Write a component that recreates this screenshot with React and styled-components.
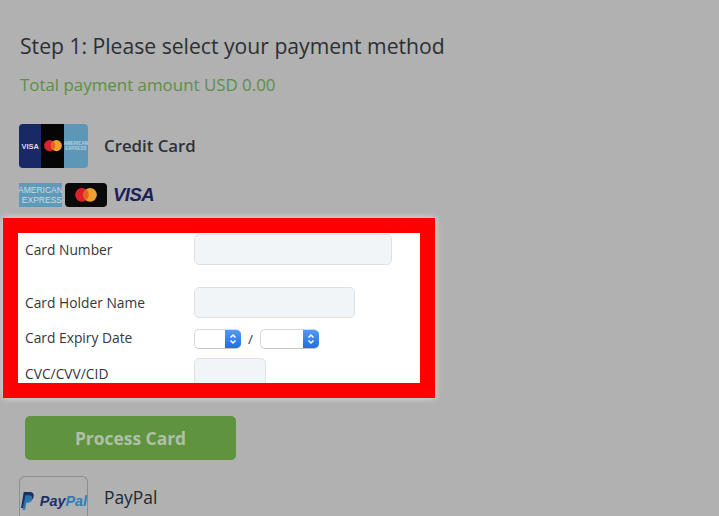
import React from 'react'
import styled, { createGlobalStyle } from 'styled-components'

const GlobalStyle = createGlobalStyle`
  html, body {
    margin: 0;
    height: 100%;
    overflow: hidden;
    background: #b1b1b1;
    font-family: "Open Sans", "Liberation Sans", sans-serif;
  }
`

const Page = styled.div`
  height: 516px;
  overflow: hidden;
  padding: 32px 0 0 19px;
  box-sizing: border-box;
  background: #b1b1b1;
`

const Heading = styled.h1`
  margin: 0 0 0 1px;
  font-size: 21.15px;
  line-height: 28px;
  font-weight: 400;
  color: #2b2f35;
`

const Total = styled.div`
  margin: 13px 0 0 1px;
  font-size: 16.9px;
  line-height: 24px;
  font-weight: 400;
  color: #5b8f44;
`

const MethodRow = styled.div`
  display: flex;
  align-items: center;
  gap: 16px;
  margin-top: ${p => p.$top}px;
`

const MethodIcon = styled.div`
  width: 69px;
  height: 44px;
  flex: none;
  border-radius: 4px;
  overflow: hidden;
  display: flex;
`

const PaypalBox = styled(MethodIcon)`
  box-sizing: border-box;
  border: 1px solid #8d8d8d;
  border-bottom: none;
  border-radius: 6px 6px 0 0;
  align-items: center;
  justify-content: flex-start;
  padding: 4px 0 0 0;
  gap: 5px;
`

const MethodLabel = styled.span`
  padding-bottom: 2px;
  font-size: 16.8px;
  font-weight: 600;
  color: #2c3238;
`

const PaypalLabel = styled(MethodLabel)`
  padding-bottom: 3px;
  font-size: 17.4px;
  font-weight: 500;
  color: #24282d;
`

const Stripe = styled.div`
  flex: 1;
  background: ${p => p.$bg};
  display: flex;
  align-items: center;
  justify-content: center;
`

const LogoRow = styled.div`
  display: flex;
  align-items: center;
  margin-top: 15px;
  height: 24px;
`

const Amex = styled.div`
  width: 43px;
  height: 24px;
  background: #5f9bb9;
  color: #c8dbe4;
  font-family: "Liberation Sans", sans-serif;
  font-size: 8.5px;
  line-height: 10px;
  font-weight: 400;
  display: flex;
  flex-direction: column;
  justify-content: center;
  white-space: nowrap;
  overflow: hidden;
`

const AmexLine = styled.span`
  align-self: ${p => p.$end ? 'flex-end' : 'center'};
`

const MasterTile = styled.div`
  width: 42px;
  height: 24px;
  margin-left: 3px;
  background: #0a0a0a;
  border-radius: 4px;
  display: flex;
  align-items: center;
  justify-content: center;
`

const VisaWord = styled.span`
  margin-left: 6px;
  font-family: "Liberation Sans", sans-serif;
  font-size: 18.5px;
  font-weight: 700;
  font-style: italic;
  color: #1b2058;
  letter-spacing: -0.5px;
`

const SmallVisa = styled.span`
  font-family: "Liberation Sans", sans-serif;
  font-size: 7.5px;
  font-weight: 700;
  color: #d9dce8;
`

const AmexSmall = styled.span`
  font-family: "Liberation Sans", sans-serif;
  font-size: 4.5px;
  line-height: 5px;
  font-weight: 700;
  color: #b6d1de;
  text-align: center;
`

const Frame = styled.section`
  margin: 11px 0 0 -16px;
  width: 432px;
  height: 180px;
  box-sizing: border-box;
  border: 15px solid #fe0000;
  background: #fff;
  overflow: hidden;
  box-shadow: 0 0 7px rgba(255, 255, 255, 0.6);
`

const FormRow = styled.div`
  display: flex;
  align-items: center;
  margin-top: ${p => p.$top}px;
`

const FieldLabel = styled.label`
  width: 169px;
  padding-left: 7px;
  flex: none;
  font-size: 13.8px;
  color: #33383d;
`

const ExpiryLabel = styled(FieldLabel)`
  padding-bottom: 2px;
`

const TextField = styled.input`
  width: ${p => p.$w}px;
  height: 31px;
  box-sizing: border-box;
  padding: 0;
  background: #f2f5f8;
  border: 1px solid #dfe2e5;
  border-radius: 5px;
  outline: none;
  flex: none;
`

const SelectBox = styled.div`
  width: ${p => p.$w}px;
  height: 20px;
  box-sizing: border-box;
  display: flex;
  justify-content: flex-end;
  background: #fff;
  border: 1px solid #d8d8d8;
  border-bottom-color: #c4c4c4;
  border-right: none;
  border-radius: 5px;
  overflow: hidden;
  flex: none;
`

const Stepper = styled.div`
  width: 16px;
  background: linear-gradient(#4f9bf5, #1f6fe0);
  display: flex;
  align-items: center;
  justify-content: center;
`

const Slash = styled.span`
  width: 19px;
  text-align: center;
  font-size: 13.5px;
  color: #33383d;
`

const ProcessButton = styled.button`
  display: block;
  margin: 18px 0 0 6px;
  width: 211px;
  height: 44px;
  border: none;
  border-radius: 5px;
  background: #5f9340;
  color: #b0c0a8;
  font-family: inherit;
  font-size: 17.4px;
  font-weight: 700;
`

const PaypalWord = styled.span`
  padding-top: 2px;
  font-family: "Liberation Sans", sans-serif;
  font-size: 14.4px;
  line-height: 15px;
  font-weight: 700;
  font-style: italic;
  color: #1b2f66;
  white-space: nowrap;
`

const PaypalAccent = styled.span`
  color: #2b7fb5;
`

function MastercardMark({ size = 22 }) {
  return (
    <svg width={size} height={size * 0.62} viewBox="0 0 24 15">
      <circle cx="7.5" cy="7.5" r="7.5" fill="#d9222a" />
      <circle cx="16.5" cy="7.5" r="7.5" fill="#ee9f2d" />
      <path d="M12 1.5a7.5 7.5 0 0 1 0 12a7.5 7.5 0 0 1 0-12z" fill="#e8621f" />
    </svg>
  )
}

function Chevrons() {
  return (
    <svg width="8" height="12" viewBox="0 0 8 12" fill="none" stroke="#fff" strokeWidth="1.5">
      <path d="M1.5 4.5 4 2l2.5 2.5" />
      <path d="M1.5 7.5 4 10l2.5-2.5" />
    </svg>
  )
}

function PaypalMark() {
  return (
    <svg width="15" height="18" viewBox="0 0 13 17">
      <path d="M3 0h5.500C11.500 0 13 1.800 12.400 4.600 11.800 7.600 9.800 9 7 9H5.200L4.200 15H0.500z" fill="#1b2f66" />
      <path d="M4.700 3h3.300c2 0 3.500 1 3 3.600-.5 2.600-2.200 3.900-4.500 3.900H5.500L4.500 17H1.800z" fill="#2b7fb5" opacity="0.85" />
    </svg>
  )
}

export default function App() {
  return (
    <Page>
      <GlobalStyle />
      <Heading>Step 1: Please select your payment method</Heading>
      <Total>Total payment amount USD 0.00</Total>

      <MethodRow $top={27}>
        <MethodIcon>
          <Stripe $bg="#172a66"><SmallVisa>VISA</SmallVisa></Stripe>
          <Stripe $bg="#050505"><MastercardMark size={18} /></Stripe>
          <Stripe $bg="#5d97b8"><AmexSmall>AMERICAN<br />EXPRESS</AmexSmall></Stripe>
        </MethodIcon>
        <MethodLabel>Credit Card</MethodLabel>
      </MethodRow>

      <LogoRow>
        <Amex>
          <AmexLine>AMERICAN</AmexLine>
          <AmexLine $end>EXPRESS</AmexLine>
        </Amex>
        <MasterTile><MastercardMark size={22} /></MasterTile>
        <VisaWord>VISA</VisaWord>
      </LogoRow>

      <Frame>
        <FormRow $top={1}>
          <FieldLabel>Card Number</FieldLabel>
          <TextField $w={198} />
        </FormRow>
        <FormRow $top={22}>
          <FieldLabel>Card Holder Name</FieldLabel>
          <TextField $w={161} />
        </FormRow>
        <FormRow $top={10}>
          <ExpiryLabel>Card Expiry Date</ExpiryLabel>
          <SelectBox $w={47}><Stepper><Chevrons /></Stepper></SelectBox>
          <Slash>/</Slash>
          <SelectBox $w={59}><Stepper><Chevrons /></Stepper></SelectBox>
        </FormRow>
        <FormRow $top={9}>
          <FieldLabel>CVC/CVV/CID</FieldLabel>
          <TextField $w={72} />
        </FormRow>
      </Frame>

      <ProcessButton>Process Card</ProcessButton>

      <MethodRow $top={16}>
        <PaypalBox>
          <PaypalMark />
          <PaypalWord>Pay<PaypalAccent>Pal</PaypalAccent></PaypalWord>
        </PaypalBox>
        <PaypalLabel>PayPal</PaypalLabel>
      </MethodRow>
    </Page>
  )
}
